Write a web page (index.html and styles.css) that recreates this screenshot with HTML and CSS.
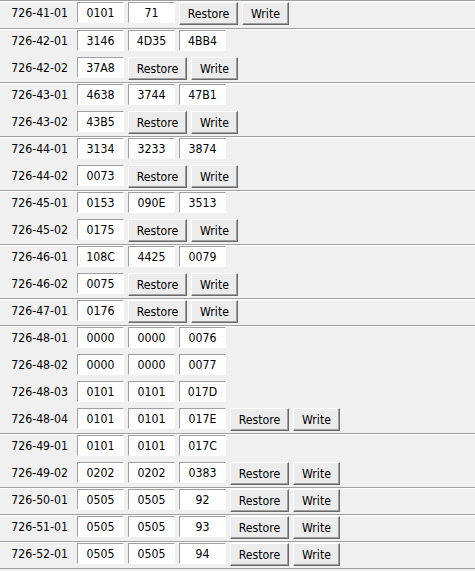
FILE: index.html
```html
<!DOCTYPE html>
<html>
<head>
<meta charset="utf-8">
<link rel="stylesheet" href="styles.css">
</head>
<body>
<div class="list">
  <div class="group first">
    <div class="row"><span class="lbl">726-41-01</span><input class="val" value="0101" readonly><input class="val" value="71" readonly><button class="btn restore">Restore</button><button class="btn write">Write</button></div>
  </div>
  <div class="group">
    <div class="row"><span class="lbl">726-42-01</span><input class="val" value="3146" readonly><input class="val" value="4D35" readonly><input class="val" value="4BB4" readonly></div>
    <div class="row"><span class="lbl">726-42-02</span><input class="val" value="37A8" readonly><button class="btn restore">Restore</button><button class="btn write">Write</button></div>
  </div>
  <div class="group">
    <div class="row"><span class="lbl">726-43-01</span><input class="val" value="4638" readonly><input class="val" value="3744" readonly><input class="val" value="47B1" readonly></div>
    <div class="row"><span class="lbl">726-43-02</span><input class="val" value="43B5" readonly><button class="btn restore">Restore</button><button class="btn write">Write</button></div>
  </div>
  <div class="group">
    <div class="row"><span class="lbl">726-44-01</span><input class="val" value="3134" readonly><input class="val" value="3233" readonly><input class="val" value="3874" readonly></div>
    <div class="row"><span class="lbl">726-44-02</span><input class="val" value="0073" readonly><button class="btn restore">Restore</button><button class="btn write">Write</button></div>
  </div>
  <div class="group">
    <div class="row"><span class="lbl">726-45-01</span><input class="val" value="0153" readonly><input class="val" value="090E" readonly><input class="val" value="3513" readonly></div>
    <div class="row"><span class="lbl">726-45-02</span><input class="val" value="0175" readonly><button class="btn restore">Restore</button><button class="btn write">Write</button></div>
  </div>
  <div class="group">
    <div class="row"><span class="lbl">726-46-01</span><input class="val" value="108C" readonly><input class="val" value="4425" readonly><input class="val" value="0079" readonly></div>
    <div class="row"><span class="lbl">726-46-02</span><input class="val" value="0075" readonly><button class="btn restore">Restore</button><button class="btn write">Write</button></div>
  </div>
  <div class="group">
    <div class="row"><span class="lbl">726-47-01</span><input class="val" value="0176" readonly><button class="btn restore">Restore</button><button class="btn write">Write</button></div>
  </div>
  <div class="group">
    <div class="row"><span class="lbl">726-48-01</span><input class="val" value="0000" readonly><input class="val" value="0000" readonly><input class="val" value="0076" readonly></div>
    <div class="row"><span class="lbl">726-48-02</span><input class="val" value="0000" readonly><input class="val" value="0000" readonly><input class="val" value="0077" readonly></div>
    <div class="row"><span class="lbl">726-48-03</span><input class="val" value="0101" readonly><input class="val" value="0101" readonly><input class="val" value="017D" readonly></div>
    <div class="row"><span class="lbl">726-48-04</span><input class="val" value="0101" readonly><input class="val" value="0101" readonly><input class="val" value="017E" readonly><button class="btn restore">Restore</button><button class="btn write">Write</button></div>
  </div>
  <div class="group">
    <div class="row"><span class="lbl">726-49-01</span><input class="val" value="0101" readonly><input class="val" value="0101" readonly><input class="val" value="017C" readonly></div>
    <div class="row"><span class="lbl">726-49-02</span><input class="val" value="0202" readonly><input class="val" value="0202" readonly><input class="val" value="0383" readonly><button class="btn restore">Restore</button><button class="btn write">Write</button></div>
  </div>
  <div class="group">
    <div class="row"><span class="lbl">726-50-01</span><input class="val" value="0505" readonly><input class="val" value="0505" readonly><input class="val" value="92" readonly><button class="btn restore">Restore</button><button class="btn write">Write</button></div>
  </div>
  <div class="group">
    <div class="row"><span class="lbl">726-51-01</span><input class="val" value="0505" readonly><input class="val" value="0505" readonly><input class="val" value="93" readonly><button class="btn restore">Restore</button><button class="btn write">Write</button></div>
  </div>
  <div class="group last">
    <div class="row"><span class="lbl">726-52-01</span><input class="val" value="0505" readonly><input class="val" value="0505" readonly><input class="val" value="94" readonly><button class="btn restore">Restore</button><button class="btn write">Write</button></div>
  </div>
</div>
</body>
</html>
```

FILE: styles.css
```css
html, body {
  margin: 0;
  padding: 0;
  background: #f0f0f0;
}
body {
  font-family: "DejaVu Sans Condensed", "DejaVu Sans", sans-serif;
  font-stretch: condensed;
  font-size: 12.2px;
  color: #000;
  overflow: hidden;
}
.list {
  display: flex;
  flex-direction: column;
}
.group {
  border-top: 1px solid #a0a0a0;
  box-shadow: inset 0 1px 0 #ffffff;
  padding: 1px 0 2px 0;
  display: flex;
  flex-direction: column;
  gap: 4px;
}
.group.first {
  padding-bottom: 3px;
}
.group.last {
  border-bottom: 1px solid #a0a0a0;
}
.row {
  display: flex;
  align-items: flex-start;
  gap: 4px;
  height: 23px;
}
.lbl {
  width: 68px;
  padding-right: 4px;
  margin-right: 1px;
  text-align: right;
  line-height: 22px;
  white-space: nowrap;
}
.val {
  box-sizing: border-box;
  width: 47px;
  height: 21px;
  margin: 0;
  padding: 1px 0 0 0;
  border: 1px solid;
  border-color: #a0a0a0 #ffffff #ffffff #a0a0a0;
  background: #ffffff;
  font-family: "DejaVu Sans Condensed", "DejaVu Sans", sans-serif;
  font-stretch: condensed;
  font-size: 12.2px;
  color: #000;
  text-align: center;
  outline: none;
}
.btn {
  box-sizing: border-box;
  height: 23px;
  margin: 0;
  padding: 1px 0 0 0;
  border: 1px solid;
  border-color: #ffffff #696969 #696969 #ffffff;
  box-shadow: inset -1px -1px 0 #a0a0a0;
  background: #ececec;
  font-family: "DejaVu Sans Condensed", "DejaVu Sans", sans-serif;
  font-stretch: condensed;
  font-size: 12.2px;
  color: #000;
  text-align: center;
}
.restore {
  width: 59px;
}
.write {
  width: 47px;
}
```
